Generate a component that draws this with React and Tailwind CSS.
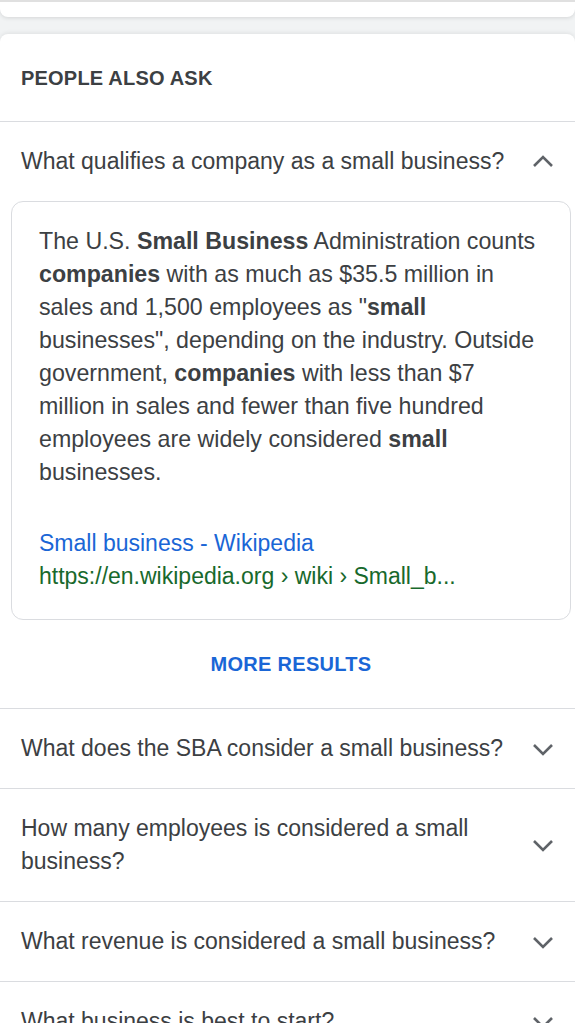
import React from 'react'

function Chevron({ up }) {
  return (
    <svg width="24" height="24" viewBox="0 0 24 24" className="shrink-0 text-[#5f6368]">
      <path
        d={up ? 'M3 16l9-9 9 9' : 'M3 8l9 9 9-9'}
        fill="none"
        stroke="currentColor"
        strokeWidth="2.6"
      />
    </svg>
  )
}

function Question({ text, up }) {
  return (
    <div className="flex items-center justify-between gap-6 pl-[21px] pr-[20px] py-[23px] border-t border-[#dadce0]">
      <span className="text-[23px] leading-[33px] text-[#3c4043]">{text}</span>
      <Chevron up={up} />
    </div>
  )
}

export default function App() {
  const others = [
    'What does the SBA consider a small business?',
    'How many employees is considered a small business?',
    'What revenue is considered a small business?',
    'What business is best to start?',
  ]

  return (
    <div className="min-h-screen bg-[#f1f3f4] font-['Liberation_Sans',Arial,sans-serif] overflow-hidden">
      {/* previous card bottom */}
      <div className="h-[17px] bg-white border-t-2 border-[#e0e0e0] rounded-b-lg shadow-[0_1px_4px_rgba(0,0,0,0.12)]" />

      <div className="mt-[17px] bg-white rounded-t-lg shadow-[0_-1px_4px_rgba(0,0,0,0.08)]">
        {/* Header */}
        <div className="px-[21px] h-[87px] flex items-center">
          <h2 className="text-[20px] font-bold text-[#3c4043] tracking-[0.2px]">PEOPLE ALSO ASK</h2>
        </div>

        <Question text="What qualifies a company as a small business?" up />

        {/* Answer */}
        <div className="pl-[11px] pr-[4px]">
          <div className="border border-[#dadce0] rounded-xl pl-[27px] pr-[28px] pt-[23px] pb-[26px]">
            <p className="text-[23.2px] leading-[33px] text-[#3c4043]">
              The U.S. <b>Small Business</b> Administration counts <b>companies</b> with as much as $35.5
              million in sales and 1,500 employees as "<b>small</b> businesses", depending on the
              industry. Outside government, <b>companies</b> with less than $7 million in sales and fewer
              than five hundred employees are widely considered <b>small</b> businesses.
            </p>
            <div className="mt-[38px]">
              <div className="text-[23px] leading-[33px] text-[#1a66d6]">Small business - Wikipedia</div>
              <div className="text-[23px] leading-[33px] text-[#18692c] whitespace-nowrap">
                https://en.wikipedia.org › wiki › Small_b...
              </div>
            </div>
          </div>
        </div>

        <div className="h-[88px] flex items-center justify-center pl-[7px]">
          <span className="text-[20px] font-bold text-[#1a66d6] tracking-[0.3px]">MORE RESULTS</span>
        </div>

        {others.map((q) => (
          <Question key={q} text={q} />
        ))}
      </div>
    </div>
  )
}
